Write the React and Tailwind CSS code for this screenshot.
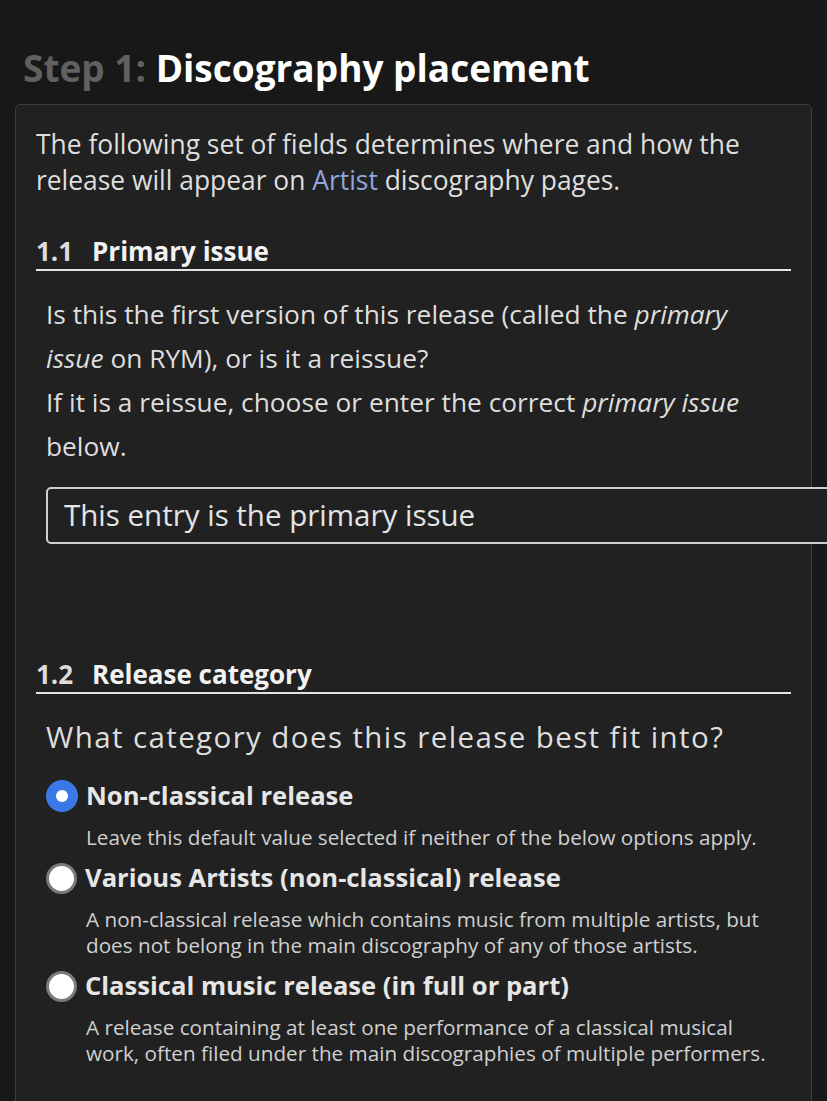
const RELEASE_TYPES = [
  {
    value: "nonclassical",
    label: "Non-classical release",
    desc: ["Leave this default value selected if neither of the below options apply."],
  },
  {
    value: "va",
    label: "Various Artists (non-classical) release",
    desc: [
      "A non-classical release which contains music from multiple artists, but",
      "does not belong in the main discography of any of those artists.",
    ],
  },
  {
    value: "classical",
    label: "Classical music release (in full or part)",
    desc: [
      "A release containing at least one performance of a classical musical",
      "work, often filed under the main discographies of multiple performers.",
    ],
  },
]

function SectionTitle({ num, children, className }) {
  return (
    <h2 className={"flex items-center whitespace-nowrap border-b-2 border-[#e4e4e4] text-[26px] font-bold leading-[36px] text-[#f2f2f2] " + className}>
      <span className="w-[56px] text-[#dcdcdc]">{num}</span>
      {children}
    </h2>
  )
}

function Radio({ checked }) {
  if (checked) {
    return (
      <span className="flex h-[32px] w-[32px] shrink-0 items-center justify-center rounded-full bg-[#3b78e7]">
        <span className="h-[12px] w-[12px] rounded-full bg-white" />
      </span>
    )
  }
  return <span className="h-[31px] w-[31px] shrink-0 rounded-full border-[3px] border-[#7a7a7a] bg-white" />
}

export default function App() {
  const selected = "nonclassical"

  return (
    <div className="min-h-[1101px] bg-[#181818] px-[15px] pt-[46px] font-['Open_Sans','Liberation_Sans',sans-serif]">
      {/* Page Header */}
      <h1 className="ml-[8px] whitespace-nowrap text-[37px] font-bold leading-[44px] text-white">
        <span className="text-[#606060]">Step 1:</span> Discography placement
      </h1>

      <div className="mt-[14px] h-[1100px] rounded-[5px] border border-[#3e3e3e] bg-[#212121] px-[20px] pt-[21px]">
        <p className="whitespace-nowrap text-[26.4px] leading-[36px] text-[#dedede]">
          The following set of fields determines where and how the
          <br />
          release will appear on <span className="text-[#8ea6dc]">Artist</span> discography pages.
        </p>

        {/* 1.1 */}
        <SectionTitle num="1.1" className="mt-[35px]">Primary issue</SectionTitle>
        <div className="pl-[10px]">
          <p className="mt-[21px] whitespace-nowrap text-[26.3px] leading-[44px] text-[#dedede]">
            Is this the first version of this release (called the <i>primary</i>
            <br />
            <i>issue</i> on RYM), or is it a reissue?
            <br />
            If it is a reissue, choose or enter the correct <i>primary issue</i>
            <br />
            below.
          </p>
          <div className="mt-[19px] flex h-[57px] w-[800px] items-center whitespace-nowrap rounded-[5px] border-2 border-[#cfcfcf] bg-[#212121] px-[16px] text-[29.5px] text-[#e4e4e4]">
            This entry is the primary issue
          </div>
        </div>

        {/* 1.2 */}
        <SectionTitle num="1.2" className="mt-[112px]">Release category</SectionTitle>
        <div className="pl-[10px]">
          <p className="mt-[21px] whitespace-nowrap text-[29.5px] leading-[44px] tracking-[1.4px] text-[#dedede]">
            What category does this release best fit into?
          </p>
          <div className="mt-[19px] flex flex-col gap-[10px]">
            {RELEASE_TYPES.map((t) => (
              <div key={t.value}>
                <div className="flex items-center gap-[8px]">
                  <Radio checked={t.value === selected} />
                  <span className="whitespace-nowrap text-[25.6px] font-bold leading-[36px] text-[#e6e6e6]">{t.label}</span>
                </div>
                <div className="mt-[10px] whitespace-nowrap pl-[40px] text-[20.7px] leading-[26px] text-[#d0d0d0]">
                  {t.desc.map((line) => (
                    <div key={line}>{line}</div>
                  ))}
                </div>
              </div>
            ))}
          </div>
        </div>
      </div>
    </div>
  )
}
